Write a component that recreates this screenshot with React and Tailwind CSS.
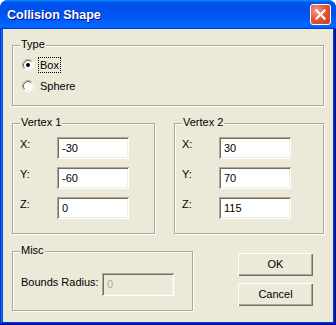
import React from "react";

function Group({ label, className, children }) {
  return (
    <div
      className={
        "relative border border-[#ACA899] shadow-[inset_1px_1px_0_#fff,1px_1px_0_#fff] " +
        className
      }
    >
      <span className="absolute left-[7px] top-[-8px] bg-[#ECE9D8] px-[1px] leading-[13px] text-black">
        {label}
      </span>
      {children}
    </div>
  );
}

function Radio({ checked }) {
  return (
    <svg width="12" height="12" viewBox="0 0 12 12" className="shrink-0">
      <circle cx="6" cy="6" r="5" fill="#fff" />
      <path d="M2.11 9.89 A5.5 5.5 0 0 1 9.89 2.11" fill="none" stroke="#ACA899" strokeWidth="1" />
      <path d="M9.89 2.11 A5.5 5.5 0 0 1 2.11 9.89" fill="none" stroke="#fff" strokeWidth="1" />
      <path d="M2.82 9.18 A4.5 4.5 0 0 1 9.18 2.82" fill="none" stroke="#716F64" strokeWidth="1" />
      <path d="M9.18 2.82 A4.5 4.5 0 0 1 2.82 9.18" fill="none" stroke="#F1EFE2" strokeWidth="1" />
      {checked && <circle cx="6" cy="6" r="2" fill="#000" />}
    </svg>
  );
}

function Field({ value, w = "w-[72px]", h = "h-[22px]", disabled }) {
  return (
    <div
      className={
        "flex items-center pl-[5px] leading-[13px] shadow-[inset_1px_1px_0_#ACA899,inset_-1px_-1px_0_#fff,inset_2px_2px_0_#716F64,inset_-2px_-2px_0_#F1EFE2] " +
        w +
        " " +
        h +
        (disabled ? " bg-[#ECE9D8] text-[#ACA899]" : " bg-white text-black")
      }
    >
      {value}
    </div>
  );
}

function Button({ children }) {
  return (
    <div className="flex h-[23px] w-[75px] items-center justify-center bg-[#ECE9D8] leading-[13px] text-black shadow-[inset_1px_1px_0_#fff,inset_-1px_-1px_0_#716F64,inset_-2px_-2px_0_#ACA899]">
      {children}
    </div>
  );
}

function Vertex({ label, values }) {
  return (
    <Group label={label} className="h-[111px]">
      <div className="flex flex-col gap-[8px] pl-[7px] pt-[13px]">
        {["X:", "Y:", "Z:"].map((l, i) => (
          <div key={l} className="flex items-start">
            <span className="w-[37px] leading-[13px] mt-[1px]">{l}</span>
            <Field value={values[i]} />
          </div>
        ))}
      </div>
    </Group>
  );
}

export default function App() {
  return (
    <div
      className="flex h-[325px] w-[336px] flex-col overflow-hidden rounded-t-[8px] bg-[#0831D9] text-[11px] text-black"
      style={{ fontFamily: '"Liberation Sans", Arial, sans-serif' }}
    >
      <div className="flex h-[29px] shrink-0 items-center justify-between bg-[linear-gradient(180deg,#0997ff,#0053ee_8%,#0050ee_40%,#0066ff_88%,#0066ff_93%,#005bff_95%,#003dd7_96%,#003dd7)] pl-[7px] pr-[5px]">
        <span className="text-[12.5px] font-bold leading-[16px] text-white [text-shadow:1px_1px_#0f1089]">
          Collision Shape
        </span>
        <div className="flex h-[21px] w-[21px] items-center justify-center rounded-[3px] border border-white bg-[radial-gradient(circle_at_30%_30%,#f0a08a_0%,#e2583a_45%,#c8401c_100%)]">
          <svg width="11" height="11" viewBox="0 0 11 11">
            <path d="M1.5 1.5 L9.5 9.5 M9.5 1.5 L1.5 9.5" stroke="#fff" strokeWidth="2.2" strokeLinecap="square" />
          </svg>
        </div>
      </div>
      <div className="flex flex-1 px-[3px] pb-[3px] shadow-[inset_-1px_-1px_#00138c,inset_1px_0_#0831d9,inset_-2px_-2px_#001ea0,inset_2px_0_#166aee,inset_-3px_-3px_#003bda,inset_3px_0_#0855dd]">
        <div className="flex flex-1 flex-col bg-[#ECE9D8] px-[9px] pt-[16px]">
          <Group label="Type" className="h-[61px]">
            <div className="flex flex-col gap-[5px] pl-[9px] pt-[11px]">
              <div className="flex h-[16px] items-center gap-[4px]">
                <Radio checked />
                <span className="flex h-[16px] items-center border border-dotted border-black px-[1px] leading-[13px]">
                  Box
                </span>
              </div>
              <div className="flex h-[16px] items-center gap-[4px]">
                <Radio />
                <span className="px-[2px] leading-[13px]">Sphere</span>
              </div>
            </div>
          </Group>
          <div className="mt-[17px] flex gap-[19px]">
            <div className="w-[143px]">
              <Vertex label="Vertex 1" values={["-30", "-60", "0"]} />
            </div>
            <div className="flex-1">
              <Vertex label="Vertex 2" values={["30", "70", "115"]} />
            </div>
          </div>
          <div className="mt-[17px] flex items-start">
            <Group label="Misc" className="h-[60px] w-[181px]">
              <div className="flex items-start pl-[8px] pt-[21px]">
                <span className="mt-[3px] w-[81px] leading-[13px]">Bounds Radius:</span>
                <Field value="0" h="h-[23px]" disabled />
              </div>
            </Group>
            <div className="ml-[45px] mt-[2px] flex flex-col gap-[7px]">
              <Button>OK</Button>
              <Button>Cancel</Button>
            </div>
          </div>
        </div>
      </div>
    </div>
  );
}
